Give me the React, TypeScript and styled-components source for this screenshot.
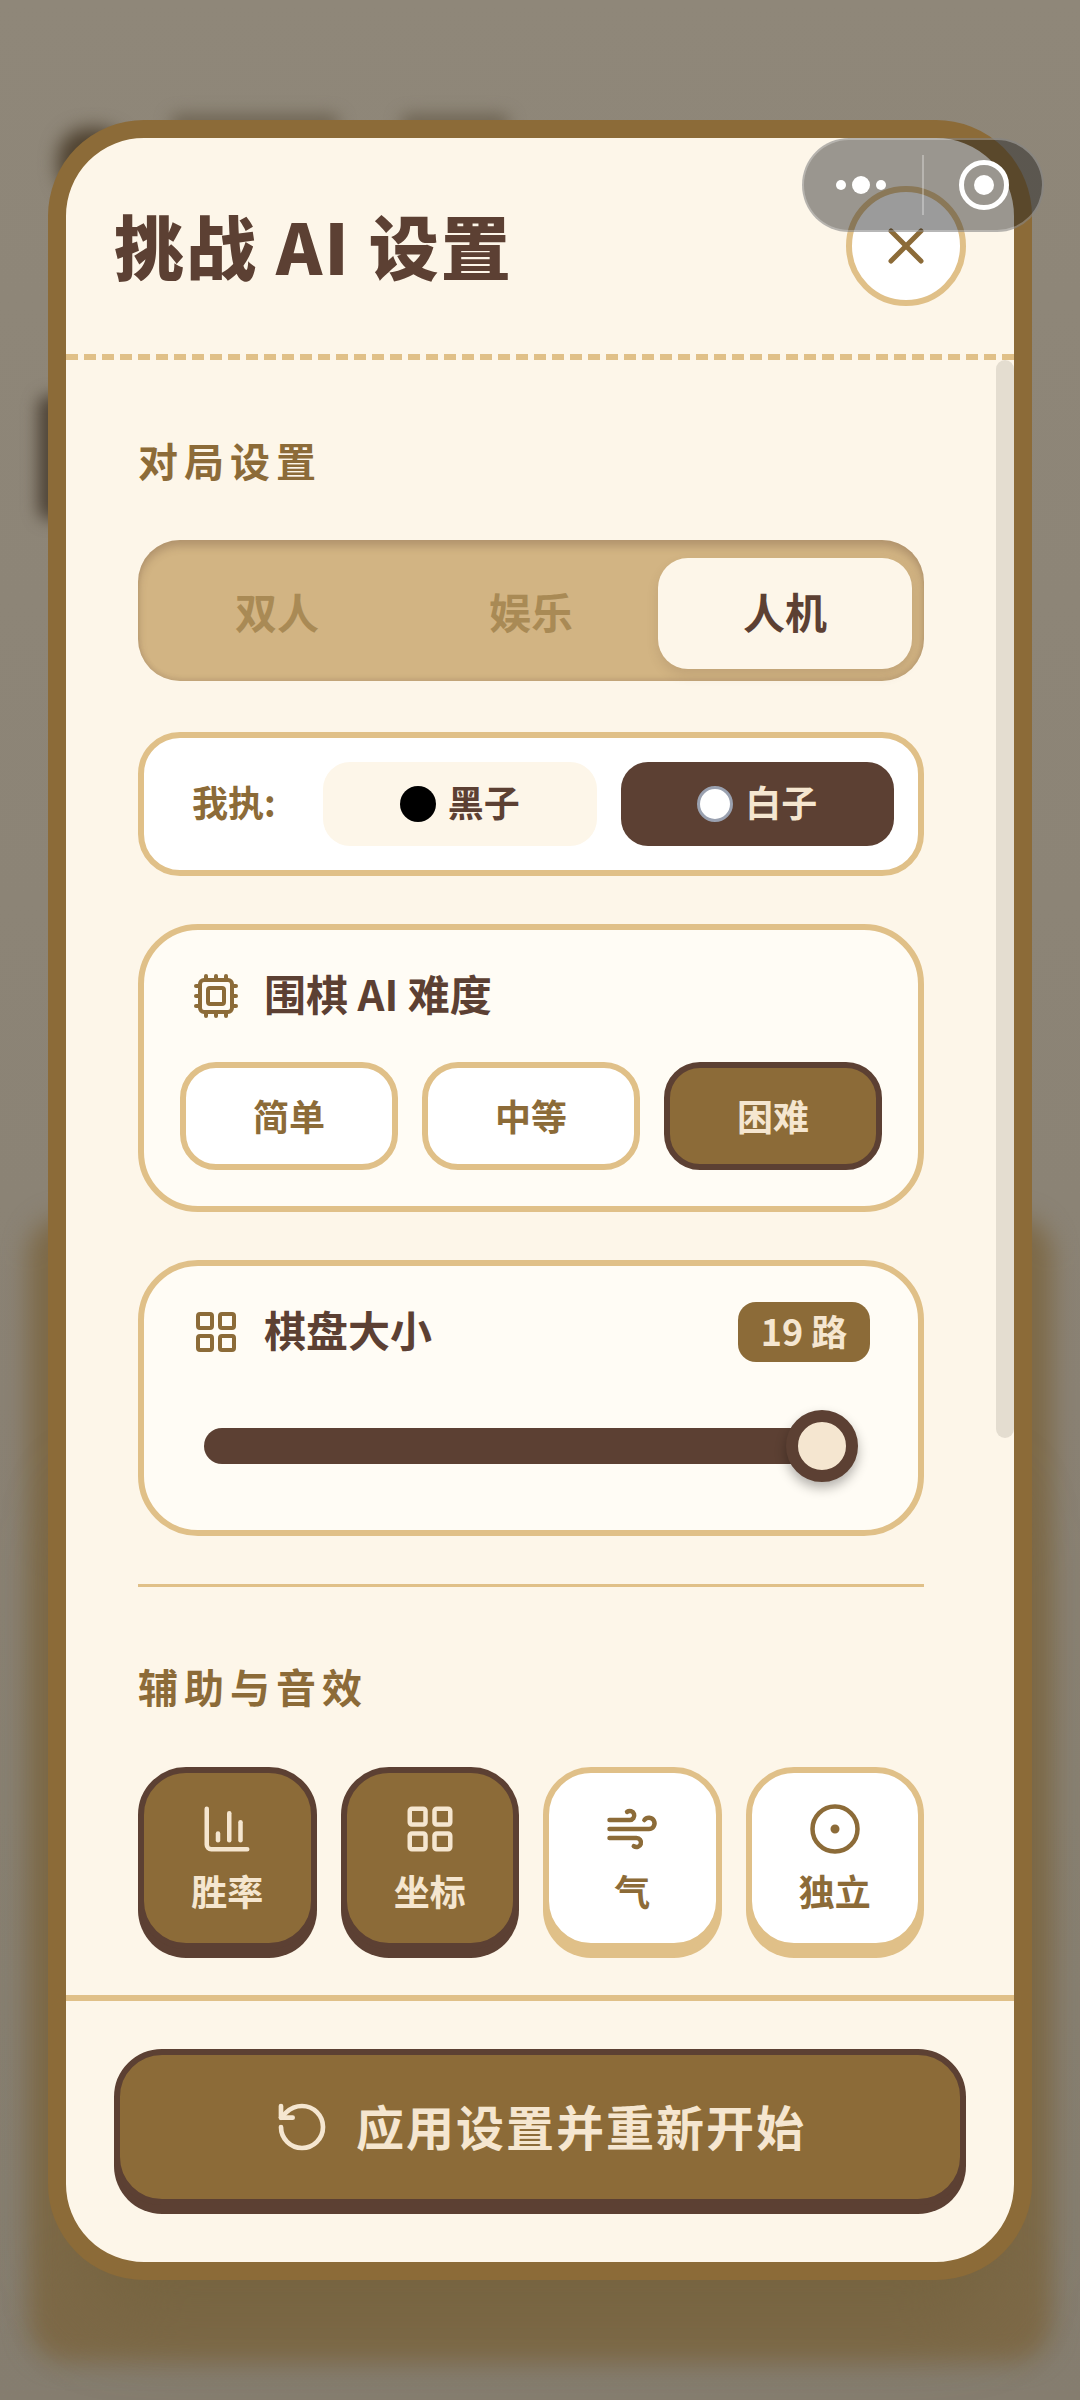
import React from 'react';
import styled, {createGlobalStyle} from 'styled-components';
import {ChartColumn, CircleDot, Cpu, LayoutGrid, RotateCcw, Wind, X} from 'lucide-react';

const color = {
  brown: '#8c6b38',
  dark: '#5c4033',
  line: '#e0c088',
  cream: '#fdf6e9',
  card: '#fffcf5',
  light: '#f5e6d0',
};

const GlobalStyle = createGlobalStyle`
  html, body {
    margin: 0;
    padding: 0;
    background: #8e8678;
  }
  * {
    box-sizing: border-box;
  }
`;

const Stage = styled.div`
  position: relative;
  width: 1080px;
  height: 2400px;
  overflow: hidden;
  padding: 120px 48px;
  background: linear-gradient(180deg, #8f8779 0%, #8b8375 50%, #857d6f 100%);
  font-family: "Noto Sans CJK SC", "Noto Sans", sans-serif;
  font-weight: 700;
`;

// blurred game board that shows through the dimmed overlay
const Blur = styled.div<{$x: number; $y: number; $w: number; $h: number; $c: string; $b: number; $r: number}>`
  position: absolute;
  left: ${(p) => p.$x}px;
  top: ${(p) => p.$y}px;
  width: ${(p) => p.$w}px;
  height: ${(p) => p.$h}px;
  background: ${(p) => p.$c};
  border-radius: ${(p) => p.$r}px;
  filter: blur(${(p) => p.$b}px);
`;

const Modal = styled.div`
  position: relative;
  display: flex;
  flex-direction: column;
  height: 2160px;
  border: 18px solid ${color.brown};
  border-radius: 96px;
  background: ${color.cream};
  overflow: hidden;
`;

const Header = styled.div`
  flex: none;
  display: flex;
  align-items: center;
  justify-content: space-between;
  height: 222px;
  padding: 0 48px;
  border-bottom: 6px dashed ${color.line};
`;

const Title = styled.div`
  padding-bottom: 2px;
  font-size: 70px;
  font-weight: 900;
  line-height: 80px;
  letter-spacing: 2px;
  color: ${color.dark};
`;

const CloseButton = styled.div`
  display: flex;
  align-items: center;
  justify-content: center;
  width: 120px;
  height: 120px;
  border: 6px solid ${color.line};
  border-radius: 50%;
  background: #fff;
  color: ${color.brown};
`;

const Body = styled.div`
  flex: 1;
  min-height: 0;
  overflow: hidden;
  padding: 70px 90px 0 72px;
`;

const ScrollThumb = styled.div`
  position: absolute;
  top: 222px;
  right: 0;
  width: 18px;
  height: 1078px;
  border-radius: 9px;
  background: #e4ddd0;
`;

const SectionLabel = styled.div`
  height: 60px;
  font-size: 40px;
  line-height: 60px;
  letter-spacing: 6px;
  color: ${color.brown};
`;

const Segments = styled.div`
  display: flex;
  height: 141px;
  margin-top: 50px;
  padding: 18px 12px 12px;
  border-radius: 42px;
  background: #d2b483;
  box-shadow: inset 0 6px 9px rgba(93, 64, 55, 0.28), inset 0 -3px 4px rgba(93, 64, 55, 0.12);
`;

const Segment = styled.div<{$active?: boolean}>`
  flex: 1;
  display: flex;
  align-items: center;
  justify-content: center;
  padding-bottom: 6px;
  border-radius: 30px;
  font-size: 42px;
  color: ${(p) => (p.$active ? color.dark : '#a98a55')};
  background: ${(p) => (p.$active ? color.cream : 'transparent')};
  box-shadow: ${(p) => (p.$active ? '0 6px 12px rgba(93, 64, 55, 0.15)' : 'none')};
`;

const StoneRow = styled.div`
  display: flex;
  align-items: center;
  gap: 24px;
  height: 144px;
  margin-top: 51px;
  padding: 0 24px 0 48px;
  border: 6px solid ${color.line};
  border-radius: 42px;
  background: #fff;
`;

const StoneLabel = styled.div`
  width: 81px;
  margin-right: 26px;
  padding-bottom: 6px;
  white-space: nowrap;
  font-size: 36px;
  color: ${color.brown};
`;

const StoneButton = styled.div<{$active?: boolean}>`
  flex: 1;
  display: flex;
  align-items: center;
  justify-content: center;
  gap: 12px;
  height: 84px;
  border-radius: 27px;
  font-size: 36px;
  color: ${(p) => (p.$active ? color.light : color.dark)};
  background: ${(p) => (p.$active ? color.dark : color.cream)};
`;

const StoneText = styled.div`
  padding-bottom: 6px;
`;

const Stone = styled.div<{$white?: boolean}>`
  width: 36px;
  height: 36px;
  border-radius: 50%;
  background: ${(p) => (p.$white ? '#fff' : '#000')};
  border: ${(p) => (p.$white ? '3px solid #9aa1b0' : 'none')};
`;

const Card = styled.div<{$height: number; $top: number}>`
  height: ${(p) => p.$height}px;
  margin-top: ${(p) => p.$top}px;
  padding: 36px;
  border: 6px solid ${color.line};
  border-radius: 60px;
  background: ${color.card};
`;

const CardHead = styled.div`
  display: flex;
  align-items: center;
  gap: 24px;
  height: 60px;
  padding: 0 12px;
  color: ${color.brown};
`;

const CardTitle = styled.div`
  flex: 1;
  padding-bottom: 8px;
  font-size: 42px;
  color: ${color.dark};
`;

const Levels = styled.div`
  display: flex;
  gap: 24px;
  margin-top: 36px;
`;

const Level = styled.div<{$active?: boolean}>`
  flex: 1;
  display: flex;
  align-items: center;
  justify-content: center;
  height: 108px;
  padding-bottom: 3px;
  border: 6px solid ${(p) => (p.$active ? color.dark : color.line)};
  border-radius: 36px;
  font-size: 36px;
  color: ${(p) => (p.$active ? color.light : color.brown)};
  background: ${(p) => (p.$active ? color.brown : '#fff')};
`;

const Badge = styled.div`
  display: flex;
  align-items: center;
  justify-content: center;
  width: 132px;
  height: 60px;
  padding-bottom: 5px;
  border-radius: 18px;
  font-size: 36px;
  color: ${color.light};
  background: ${color.brown};
`;

const Slider = styled.div`
  display: flex;
  align-items: center;
  height: 72px;
  margin: 48px 24px 0;
`;

const Track = styled.div`
  position: relative;
  flex: 1;
  height: 36px;
  margin-right: 36px;
  border-radius: 18px;
  background: ${color.dark};
`;

const Thumb = styled.div`
  position: absolute;
  top: -18px;
  right: -36px;
  width: 72px;
  height: 72px;
  border: 12px solid ${color.dark};
  border-radius: 50%;
  background: ${color.light};
  box-shadow: 0 6px 12px rgba(0, 0, 0, 0.3);
`;

const Divider = styled.div`
  height: 3px;
  margin: 48px 0 69px;
  background: ${color.line};
`;

const Toggles = styled.div`
  display: grid;
  grid-template-columns: repeat(4, 1fr);
  gap: 24px;
  margin-top: 51px;
`;

const Toggle = styled.div<{$on?: boolean}>`
  display: flex;
  flex-direction: column;
  align-items: center;
  height: 182px;
  padding-top: 29px;
  border: 6px solid ${(p) => (p.$on ? color.dark : color.line)};
  border-radius: 48px;
  font-size: 36px;
  line-height: 54px;
  color: ${(p) => (p.$on ? color.light : color.brown)};
  background: ${(p) => (p.$on ? color.brown : '#fff')};
  box-shadow: 0 9px 0 ${(p) => (p.$on ? color.dark : color.line)};
`;

const ToggleText = styled.div`
  margin-top: 7px;
`;

const Footer = styled.div`
  flex: none;
  height: 267px;
  padding: 48px;
  border-top: 6px solid ${color.line};
`;

const ApplyButton = styled.div`
  display: flex;
  align-items: center;
  justify-content: center;
  gap: 26px;
  height: 156px;
  border: 6px solid ${color.dark};
  border-radius: 48px;
  font-size: 48px;
  letter-spacing: 2px;
  color: ${color.light};
  background: ${color.brown};
  box-shadow: 0 9px 0 ${color.dark};
`;

const ApplyText = styled.div`
  padding-bottom: 4px;
`;

const Capsule = styled.div`
  position: absolute;
  left: 802px;
  top: 138px;
  display: flex;
  align-items: center;
  width: 242px;
  height: 94px;
  border: 2px solid rgba(255, 255, 255, 0.28);
  border-radius: 47px;
  background: rgba(27, 27, 27, 0.44);
`;

const Dots = styled.div`
  display: flex;
  align-items: center;
  justify-content: center;
  gap: 6px;
  width: 118px;
  height: 100%;
  padding-right: 5px;
`;

const Dot = styled.div<{$big?: boolean}>`
  width: ${(p) => (p.$big ? 18 : 10)}px;
  height: ${(p) => (p.$big ? 18 : 10)}px;
  border-radius: 50%;
  background: #fff;
`;

const CapsuleLine = styled.div`
  width: 2px;
  height: 60px;
  background: rgba(255, 255, 255, 0.3);
`;

const Target = styled.div`
  display: flex;
  align-items: center;
  justify-content: center;
  width: 50px;
  height: 50px;
  margin-left: 35px;
  border: 5px solid #fff;
  border-radius: 50%;

  &::after {
    content: '';
    width: 20px;
    height: 20px;
    border-radius: 50%;
    background: #fff;
  }
`;

export default function App() {
  return (
    <Stage>
      <GlobalStyle/>
      <Blur $x={28} $y={1216} $w={1024} $h={1146} $c="#7d6947" $b={12} $r={40}/>
      <Blur $x={90} $y={1500} $w={900} $h={810} $c="#75633f" $b={40} $r={40}/>
      <Blur $x={38} $y={395} $w={30} $h={125} $c="#4f4437" $b={8} $r={12}/>
      <Blur $x={58} $y={128} $w={70} $h={70} $c="#4f4230" $b={9} $r={30}/>
      <Blur $x={170} $y={114} $w={170} $h={20} $c="#6f6554" $b={8} $r={10}/>
      <Blur $x={400} $y={114} $w={110} $h={20} $c="#6f6554" $b={8} $r={10}/>
      <Modal>
        <Header>
          <Title>挑战 AI 设置</Title>
          <CloseButton><X size={60}/></CloseButton>
        </Header>
        <ScrollThumb/>
        <Body>
          <SectionLabel>对局设置</SectionLabel>
          <Segments>
            <Segment>双人</Segment>
            <Segment>娱乐</Segment>
            <Segment $active>人机</Segment>
          </Segments>
          <StoneRow>
            <StoneLabel>我执:</StoneLabel>
            <StoneButton><Stone/><StoneText>黑子</StoneText></StoneButton>
            <StoneButton $active><Stone $white/><StoneText>白子</StoneText></StoneButton>
          </StoneRow>
          <Card $height={288} $top={48}>
            <CardHead>
              <Cpu size={48}/>
              <CardTitle>围棋 AI 难度</CardTitle>
            </CardHead>
            <Levels>
              <Level>简单</Level>
              <Level>中等</Level>
              <Level $active>困难</Level>
            </Levels>
          </Card>
          <Card $height={276} $top={48}>
            <CardHead>
              <LayoutGrid size={48}/>
              <CardTitle>棋盘大小</CardTitle>
              <Badge>19 路</Badge>
            </CardHead>
            <Slider>
              <Track><Thumb/></Track>
            </Slider>
          </Card>
          <Divider/>
          <SectionLabel>辅助与音效</SectionLabel>
          <Toggles>
            <Toggle $on><ChartColumn size={54}/><ToggleText>胜率</ToggleText></Toggle>
            <Toggle $on><LayoutGrid size={54}/><ToggleText>坐标</ToggleText></Toggle>
            <Toggle><Wind size={54}/><ToggleText>气</ToggleText></Toggle>
            <Toggle><CircleDot size={54}/><ToggleText>独立</ToggleText></Toggle>
          </Toggles>
        </Body>
        <Footer>
          <ApplyButton>
            <RotateCcw size={56}/>
            <ApplyText>应用设置并重新开始</ApplyText>
          </ApplyButton>
        </Footer>
      </Modal>
      <Capsule>
        <Dots><Dot/><Dot $big/><Dot/></Dots>
        <CapsuleLine/>
        <Target/>
      </Capsule>
    </Stage>
  );
}
